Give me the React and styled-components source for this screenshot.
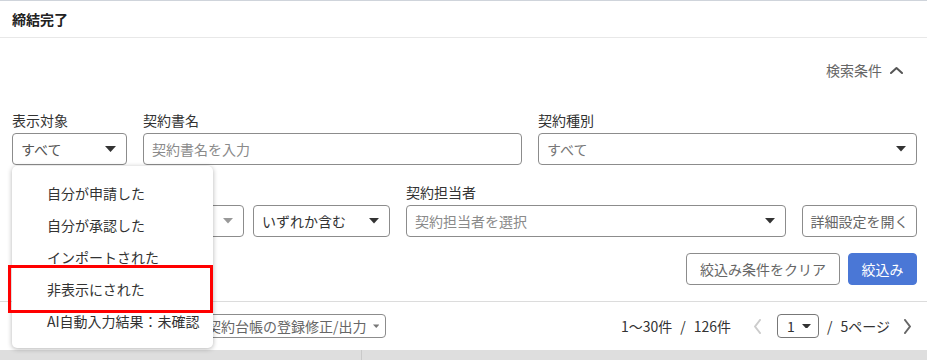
import React from "react";
import styled, { createGlobalStyle } from "styled-components";

const GlobalStyle = createGlobalStyle`
  body {
    margin: 0;
    background: #fff;
    font-family: "Noto Sans CJK JP", "Noto Sans", sans-serif;
    color: #333;
  }
`;

const Page = styled.div`
  position: relative;
  width: 927px;
  height: 359px;
  overflow: hidden;
  border-top: 1px solid #cfd4db;
`;

const Header = styled.div`
  height: 36px;
  display: flex;
  align-items: center;
  padding: 0 12px;
  border-bottom: 1px solid #e8e8e8;
`;

const Title = styled.h1`
  margin: 0;
  font-size: 14px;
  font-weight: 700;
  color: #222;
`;

const Search = styled.div`
  padding: 0 10px 16px 12px;
  border-bottom: 1px solid #dcdcdc;
`;

const Toggle = styled.div`
  display: flex;
  justify-content: flex-end;
  align-items: center;
  gap: 8px;
  height: 24px;
  margin-top: 20px;
  margin-right: 14px;
  font-size: 14px;
  color: #666;
`;

const Row1 = styled.div`
  display: grid;
  grid-template-columns: 115px 1fr 1fr;
  column-gap: 16px;
  margin-top: 28px;
`;

const Row2 = styled.div`
  display: flex;
  align-items: flex-end;
  gap: 16px;
  margin-top: 17px;
`;

const Row3 = styled.div`
  display: flex;
  justify-content: flex-end;
  gap: 8px;
  margin-top: 16px;
`;

const Field = styled.div`
  display: flex;
  flex-direction: column;
  width: ${(p) => (p.width ? p.width + "px" : "auto")};
  flex: ${(p) => (p.grow ? "1 1 0" : "none")};
  min-width: 0;
`;

const Label = styled.label`
  height: 20px;
  font-size: 14px;
  line-height: 20px;
  margin-bottom: 3px;
  color: #333;
`;

const Controls = styled.div`
  display: flex;
  gap: 9px;
`;

const Box = styled.div`
  box-sizing: border-box;
  height: 32px;
  flex: none;
  display: flex;
  align-items: center;
  justify-content: space-between;
  padding: 0 10px 0 8px;
  border: 1px solid #8c8c8c;
  border-radius: 4px;
  font-size: 14px;
  white-space: nowrap;
  color: ${(p) => p.color || "#555"};
  width: ${(p) => (p.width ? p.width + "px" : "auto")};
  background: #fff;
`;

const Button = styled.button`
  box-sizing: border-box;
  flex: none;
  height: ${(p) => p.h || 32}px;
  width: ${(p) => (p.width ? p.width + "px" : "auto")};
  padding: 0 6px;
  border-radius: 4px;
  font-family: inherit;
  font-size: 14px;
  white-space: nowrap;
  display: flex;
  align-items: center;
  justify-content: center;
  gap: 6px;
  border: 1px solid ${(p) => (p.primary ? "#4a77d6" : "#8c8c8c")};
  background: ${(p) => (p.primary ? "#4a77d6" : "#fff")};
  color: ${(p) => (p.primary ? "#fff" : "#666")};
`;

const Toolbar = styled.div`
  height: 48px;
  display: flex;
  align-items: center;
  justify-content: space-between;
  padding: 0 15px 0 12px;
`;

const ToolGroup = styled.div`
  display: flex;
  align-items: center;
  gap: 8px;
`;

const Pager = styled.div`
  display: flex;
  align-items: center;
  font-size: 14px;
  color: #333;
`;

const Slash = styled.span`
  margin: 0 8px;
`;

const PagerIcon = styled.span`
  display: flex;
  margin-left: ${(p) => p.gap}px;
`;

const PageSelect = styled.div`
  box-sizing: border-box;
  height: 24px;
  width: 42px;
  display: flex;
  align-items: center;
  justify-content: space-between;
  padding: 0 7px 0 9px;
  border: 1px solid #777;
  border-radius: 4px;
  margin: 0 0 0 15px;
`;

const TableHead = styled.div`
  display: grid;
  grid-template-columns: 362px 1fr;
  height: 10px;
  background: #dedede;
`;

const HeadCell = styled.div`
  border-right: ${(p) => (p.last ? "none" : "1px solid #c9c9c9")};
`;

const Menu = styled.ul`
  position: absolute;
  left: 12px;
  top: 165px;
  width: 201px;
  margin: 0;
  padding: 11px 0;
  list-style: none;
  background: #fff;
  border-radius: 5px;
  box-shadow: 0 1px 5px rgba(0, 0, 0, 0.3);
`;

const MenuItem = styled.li`
  height: 32px;
  display: flex;
  align-items: center;
  padding-left: 35px;
  font-size: 14px;
  color: #333;
  white-space: nowrap;
`;

const Highlight = styled.div`
  position: absolute;
  left: 8px;
  top: 264px;
  width: 205px;
  height: 48px;
  box-sizing: border-box;
  border: 3px solid #ff0000;
`;

const Caret = ({ color = "#333", w = 10 }) => (
  <svg width={w} height={w * 0.55} viewBox="0 0 10 5.5">
    <path d="M0 0 H10 L5 5.5 Z" fill={color} />
  </svg>
);

const Chevron = ({ dir, color }) => {
  const d = {
    up: "M1 7 L6.5 2 L12 7",
    left: "M7 1 L2 7.5 L7 14",
    right: "M2 1 L7 7.5 L2 14",
  }[dir];
  const vb = dir === "up" ? "0 0 13 9" : "0 0 9 15";
  return (
    <svg width={dir === "up" ? 13 : 9} height={dir === "up" ? 9 : 15} viewBox={vb}>
      <path d={d} fill="none" stroke={color} strokeWidth="2" strokeLinecap="round" strokeLinejoin="round" />
    </svg>
  );
};

const menuItems = [
  "自分が申請した",
  "自分が承認した",
  "インポートされた",
  "非表示にされた",
  "AI自動入力結果：未確認",
];

export default function App() {
  return (
    <Page>
      <GlobalStyle />
      <Header>
        <Title>締結完了</Title>
      </Header>
      <Search>
        <Toggle>
          検索条件 <Chevron dir="up" color="#555" />
        </Toggle>
        <Row1>
          <Field>
            <Label>表示対象</Label>
            <Box>
              すべて <Caret w={11} />
            </Box>
          </Field>
          <Field>
            <Label>契約書名</Label>
            <Box color="#8a8a8a">契約書名を入力</Box>
          </Field>
          <Field>
            <Label>契約種別</Label>
            <Box color="#777">
              すべて <Caret />
            </Box>
          </Field>
        </Row1>
        <Row2>
          <Field width={378}>
            <Label />
            <Controls>
              <Box width={159} />
              <Box width={64} color="#999">
                <span /> <Caret color="#999" />
              </Box>
              <Box width={137} color="#333">
                いずれか含む <Caret />
              </Box>
            </Controls>
          </Field>
          <Field grow>
            <Label>契約担当者</Label>
            <Box color="#8a8a8a">
              契約担当者を選択 <Caret />
            </Box>
          </Field>
          <Button width={115}>詳細設定を開く</Button>
        </Row2>
        <Row3>
          <Button width={154}>絞込み条件をクリア</Button>
          <Button primary width={69}>絞込み</Button>
        </Row3>
      </Search>
      <Toolbar>
        <ToolGroup>
          <Button h={24} width={180} />
          <Button h={24} width={186}>
            契約台帳の登録修正/出力 <Caret color="#777" w={8} />
          </Button>
        </ToolGroup>
        <Pager>
          <span>1〜30件</span>
          <Slash>/</Slash>
          <span>126件</span>
          <PagerIcon gap={22}>
            <Chevron dir="left" color="#ccc" />
          </PagerIcon>
          <PageSelect>
            1 <Caret w={9} />
          </PageSelect>
          <Slash>/</Slash>
          <span>5ページ</span>
          <PagerIcon gap={13}>
            <Chevron dir="right" color="#666" />
          </PagerIcon>
        </Pager>
      </Toolbar>
      <TableHead>
        <HeadCell />
        <HeadCell last />
      </TableHead>
      <Menu>
        {menuItems.map((m) => (
          <MenuItem key={m}>{m}</MenuItem>
        ))}
      </Menu>
      <Highlight />
    </Page>
  );
}
